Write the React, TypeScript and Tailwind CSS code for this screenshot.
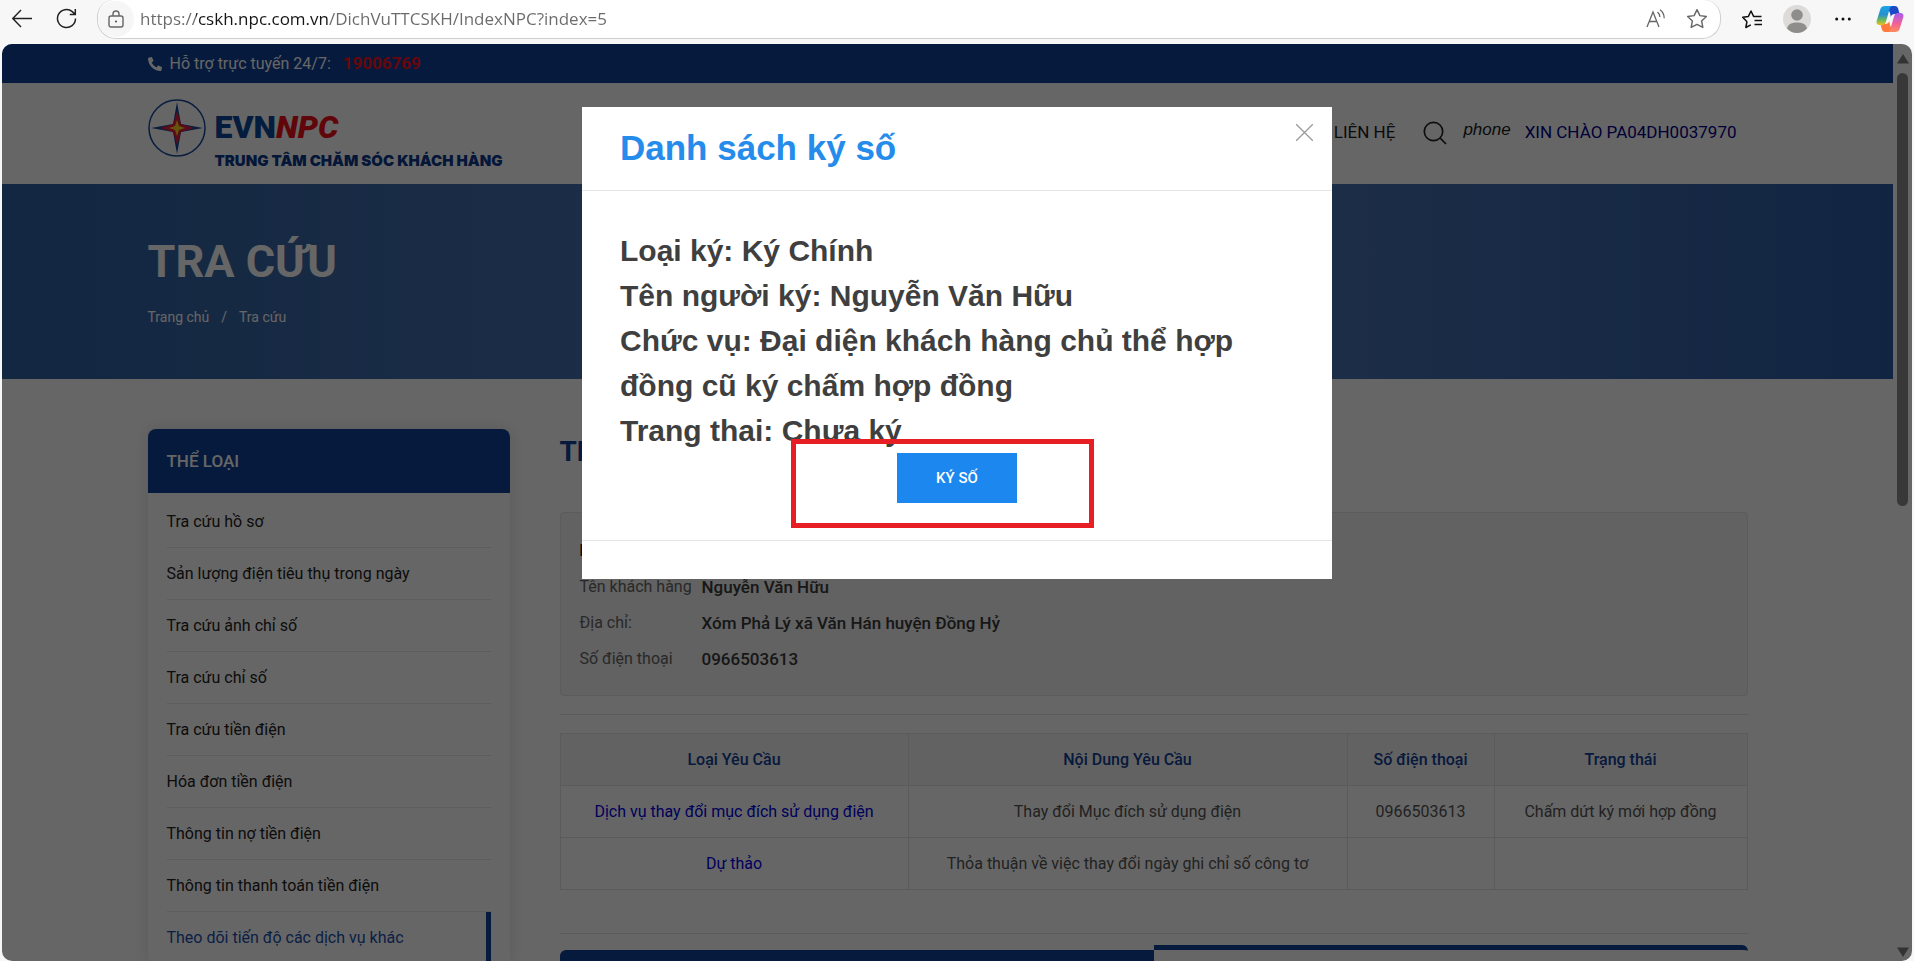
import { FaPhoneAlt } from "react-icons/fa";

type MenuItem = {
  label: string;
  active?: boolean;
};

type RequestRow = {
  type: string;
  content: string;
  phone: string;
  status: string;
};

const menuItems: MenuItem[] = [
  { label: "Tra cứu hồ sơ" },
  { label: "Sản lượng điện tiêu thụ trong ngày" },
  { label: "Tra cứu ảnh chỉ số" },
  { label: "Tra cứu chỉ số" },
  { label: "Tra cứu tiền điện" },
  { label: "Hóa đơn tiền điện" },
  { label: "Thông tin nợ tiền điện" },
  { label: "Thông tin thanh toán tiền điện" },
  { label: "Theo dõi tiến độ các dịch vụ khác", active: true },
];

const requests: RequestRow[] = [
  {
    type: "Dịch vụ thay đổi mục đích sử dụng điện",
    content: "Thay đổi Mục đích sử dụng điện",
    phone: "0966503613",
    status: "Chấm dứt ký mới hợp đồng",
  },
  {
    type: "Dự thảo",
    content: "Thỏa thuận về việc thay đổi ngày ghi chỉ số công tơ",
    phone: "",
    status: "",
  },
];

const customer = [
  { label: "Tên khách hàng", value: "Nguyễn Văn Hữu" },
  { label: "Địa chỉ:", value: "Xóm Phả Lý xã Văn Hán huyện Đồng Hỷ" },
  { label: "Số điện thoại", value: "0966503613" },
];

const signing = [
  "Loại ký: Ký Chính",
  "Tên người ký: Nguyễn Văn Hữu",
  "Chức vụ: Đại diện khách hàng chủ thể hợp đồng cũ ký chấm hợp đồng",
  "Trang thai: Chưa ký",
];

const STAR = "M10 1.5l2.6 5.4 5.9.8-4.3 4.1 1.1 5.9L10 14.9l-5.3 2.8 1.1-5.9L1.5 7.7l5.9-.8z";

function CopilotIcon() {
  return (
    <svg viewBox="0 0 28 26" className="h-[26px] w-7">
      <defs>
        <linearGradient id="cp-left" x1="0" y1="0" x2="0" y2="1">
          <stop offset="0" stopColor="#1aa5e8" />
          <stop offset="0.45" stopColor="#2790d0" />
          <stop offset="0.75" stopColor="#6fbb55" />
          <stop offset="1" stopColor="#f0c020" />
        </linearGradient>
        <linearGradient id="cp-right" x1="0" y1="0" x2="0" y2="1">
          <stop offset="0" stopColor="#a65cf0" />
          <stop offset="0.55" stopColor="#f0609a" />
          <stop offset="1" stopColor="#ff8a5c" />
        </linearGradient>
      </defs>
      <path d="M11 0h8c1.600 0 2.600 1 3.100 2.500L23.600 8H19c-2.500 0-3.500.8-4.200 3L14 7z" fill="#1b49c8" />
      <path d="M17 26H9c-1.600 0-2.600-1-3.100-2.500L4.400 18H9c2.500 0 3.500-.8 4.200-3l.8 4z" fill="#ff7a3c" />
      <path d="M9 0h7.500c-1.600 0-2.300 1.200-2.800 2.800L10 15.500C9.300 18 8.200 19 6.200 19H3.600C1 19 0 17.200.7 14.700L4.300 3.200C5 1 6.500 0 9 0z" fill="url(#cp-left)" />
      <path d="M19 26h-7.500c1.600 0 2.300-1.200 2.800-2.800L18 10.500C18.700 8 19.800 7 21.800 7h2.600c2.600 0 3.600 1.800 2.900 4.300L23.700 22.800C23 25 21.500 26 19 26z" fill="url(#cp-right)" />
    </svg>
  );
}

function BrowserBar() {
  return (
    <div className="flex h-11 shrink-0 items-start bg-[#f7f7f7] pr-2.5 pl-3">
      <button type="button" aria-label="Back" className="mt-2 mr-6">
        <svg viewBox="0 0 20 20" className="size-5 fill-none stroke-[#222] stroke-[1.4]">
          <path d="M20 10.500H.8M9 2 .8 10.500 9 19" />
        </svg>
      </button>
      <button type="button" aria-label="Refresh" className="mt-2 mr-5">
        <svg viewBox="0 0 21 21" className="size-[21px] fill-none stroke-[#222] stroke-[1.5]">
          <path d="M19.500 10.500a9 9 0 1 1-3.200-6.900L19 6.300M19.300 1v5.500h-5.500" />
        </svg>
      </button>
      <div className="flex h-[39px] flex-1 items-center rounded-b-[19px] rounded-t-[17px] border border-t-0 border-[#cfcfcf] bg-white pr-3">
        <button
          type="button"
          aria-label="Site information"
          className="mr-1.5 flex size-9 shrink-0 items-center justify-center rounded-full bg-[#f6f6f6]"
        >
          <svg viewBox="0 0 16 18" className="h-[18px] w-4 fill-none stroke-[#666] stroke-[1.4]">
            <rect x="1" y="6" width="14" height="11" rx="2" />
            <path d="M5 6V4a3 3 0 0 1 6 0v2" />
            <circle cx="8" cy="11.500" r="1" className="fill-[#444] stroke-none" />
          </svg>
        </button>
        <input
          type="text"
          aria-label="Address"
          readOnly
          value="https://cskh.npc.com.vn/DichVuTTCSKH/IndexNPC?index=5"
          className="min-w-0 flex-1 bg-[linear-gradient(90deg,#6a6a6a_56px,#151515_56px,#151515_189px,#6a6a6a_189px)] bg-clip-text font-['Open_Sans',sans-serif] text-[17px] text-transparent outline-none"
        />
        <button type="button" aria-label="Read aloud" className="mr-5">
          <svg viewBox="0 0 20 20" className="size-5 fill-none stroke-[#666] stroke-[1.3]">
            <path d="M1 18 7 3l6 15M3.200 12.500h7.600M11.500 3c1.700 1.400 2.300 3 2.400 5M14 .8c3 2.200 4.200 5 4.200 8.400" />
          </svg>
        </button>
        <button type="button" aria-label="Add to favorites">
          <svg viewBox="0 0 20 20" className="size-[22px] fill-none stroke-[#666] stroke-[1.3]">
            <path d={STAR} strokeLinejoin="round" />
          </svg>
        </button>
      </div>
      <div className="ml-5 flex h-[38px] items-center">
        <button type="button" aria-label="Favorites" className="mr-5">
          <svg viewBox="0 0 22 20" className="h-[21px] w-[22px] fill-none stroke-[#111] stroke-[1.5]">
            <path d="M6 12.300 1.700 7.700l5.700-.8L10 1.500l2.600 5.400h7.900M6 12l-1.200 6 5-2.700M13.500 11H21M13.500 15H21" strokeLinejoin="round" />
          </svg>
        </button>
        <button type="button" aria-label="Profile" className="mr-6">
          <svg viewBox="0 0 28 28" className="size-7">
            <circle cx="14" cy="14" r="14" fill="#dcdbd9" />
            <circle cx="14" cy="10" r="5.800" fill="#8f8d8a" />
            <path d="M4 23.500c1-4.500 5-6 10-6s9 1.500 10 6c-5.500 6-14.500 6-20 0z" fill="#8f8d8a" />
          </svg>
        </button>
        <button type="button" aria-label="Settings and more" className="mr-[25px]">
          <svg viewBox="0 0 16 4" className="h-1 w-4 fill-[#111]">
            <circle cx="1.700" cy="2" r="1.500" />
            <circle cx="8" cy="2" r="1.500" />
            <circle cx="14.300" cy="2" r="1.500" />
          </svg>
        </button>
        <button type="button" aria-label="Copilot">
          <CopilotIcon />
        </button>
      </div>
    </div>
  );
}

function LogoMark() {
  return (
    <svg viewBox="0 0 58 58" className="size-[58px]">
      <circle cx="29" cy="29" r="28" fill="none" stroke="#17499c" strokeWidth="1.500" />
      <path d="M29 3l4 22 22 4-22 4-4 22-4-22-22-4 22-4z" fill="#17499c" />
      <path d="M29 12l4 13 13 4-13 4-4 13-4-13-13-4 13-4z" fill="#e0203c" />
      <path d="M29 21l2 6 6 2-6 2-2 6-2-6-6-2 6-2z" fill="#ffd21e" />
    </svg>
  );
}

function SiteHeader() {
  return (
    <header>
      <div className="bg-[#114198]">
        <div className="mx-auto flex h-[39px] max-w-[1600px] items-center text-base text-white">
          <FaPhoneAlt className="mr-2 size-3.5" />
          <span>Hỗ trợ trực tuyến 24/7:</span>
          <a href="#hotline" className="ml-3 text-[17px] font-bold text-[#ff1020]">
            19006769
          </a>
        </div>
      </div>
      <div className="mx-auto flex h-[101px] max-w-[1600px] items-start justify-between pt-4 pr-[11px]">
        <a href="#home" className="flex gap-[9px]">
          <LogoMark />
          <span className="flex flex-col pt-3">
            <span className="text-[32px] leading-8 font-black text-[#0b469c]">
              EVN<i className="text-[#f0101c]">NPC</i>
            </span>
            <span className="mt-2 font-['Inter',sans-serif] text-[15px] leading-5 font-black text-[#0b3a8c]">
              TRUNG TÂM CHĂM SÓC KHÁCH HÀNG
            </span>
          </span>
        </a>
        <nav className="flex items-center pt-[18px] text-[17px] text-[#1a1a1a]">
          <a href="#contact" className="mr-7">
            LIÊN HỆ
          </a>
          <button type="button" aria-label="Tìm kiếm" className="mr-4">
            <svg viewBox="0 0 24 24" className="size-6 fill-none stroke-[#222] stroke-[1.7]">
              <circle cx="10.500" cy="10.500" r="9.200" />
              <path d="M17.200 17.200 23 23" />
            </svg>
          </button>
          <i className="mr-3.5 mb-1.5 font-['Liberation_Sans',sans-serif]">phone</i>
          <a href="#account" className="text-[#00008b]">
            XIN CHÀO PA04DH0037970
          </a>
        </nav>
      </div>
    </header>
  );
}

function Hero() {
  return (
    <section className="bg-[linear-gradient(90deg,#2f61a4,#4d75b4_40%,#4d75b4_65%,#2c5ca6)]">
      <div className="mx-auto h-[195px] max-w-[1600px] pt-[46px] text-white">
        <h1 className="text-[45px] leading-[64px] font-bold">TRA CỨU</h1>
        <div className="mt-[11px] flex gap-3 text-[14px] leading-6">
          <a href="#home">Trang chủ</a>
          <span>/</span>
          <span>Tra cứu</span>
        </div>
      </div>
    </section>
  );
}

function Sidebar() {
  return (
    <aside className="w-[362px] shrink-0 rounded-t-lg shadow-[0_0_16px_rgba(0,0,0,0.12)]">
      <h2 className="rounded-t-lg bg-[#114198] px-[19px] text-[17px] leading-[64px] font-medium text-white">
        THỂ LOẠI
      </h2>
      <ul className="px-[19px] pt-[3px]">
        {menuItems.map((item) => (
          <li key={item.label} className="border-b border-[#e8e8e8]">
            <a
              href="#menu"
              className={
                item.active
                  ? "block border-r-5 border-[#114198] text-base leading-[51px] text-[#1c4fae]"
                  : "block text-base leading-[51px] text-[#222]"
              }
            >
              {item.label}
            </a>
          </li>
        ))}
      </ul>
    </aside>
  );
}

function RequestTable() {
  return (
    <table className="w-full table-fixed border-collapse text-center text-base text-[#555]">
      <colgroup>
        <col className="w-[348px]" />
        <col />
        <col className="w-[147px]" />
        <col className="w-[253px]" />
      </colgroup>
      <thead>
        <tr className="bg-[#f4f4f4] text-[#114198]">
          <th className="h-[52px] border border-[#e4e4e4] font-medium">Loại Yêu Cầu</th>
          <th className="border border-[#e4e4e4] font-medium">Nội Dung Yêu Cầu</th>
          <th className="border border-[#e4e4e4] font-medium">Số điện thoại</th>
          <th className="border border-[#e4e4e4] font-medium">Trạng thái</th>
        </tr>
      </thead>
      <tbody>
        {requests.map((row) => (
          <tr key={row.type}>
            <td className="h-[52px] border border-[#e4e4e4]">
              <a href="#request" className="text-[#0000e6]">
                {row.type}
              </a>
            </td>
            <td className="border border-[#e4e4e4]">{row.content}</td>
            <td className="border border-[#e4e4e4]">{row.phone}</td>
            <td className="border border-[#e4e4e4]">{row.status}</td>
          </tr>
        ))}
      </tbody>
    </table>
  );
}

function MainContent() {
  return (
    <main className="min-w-0 flex-1">
      <h2 className="pt-1 text-[28px] leading-[38px] font-bold text-[#114198]">THEO DÕI TIẾN ĐỘ</h2>
      <section className="mt-[41px] rounded border border-[#e6e6e6] bg-[#f4f4f4] px-[19px] pt-5 pb-[18px] text-base leading-9 text-[#666]">
        <h3 className="font-bold text-[#222]">Mã khách hàng</h3>
        <dl className="grid grid-cols-[122px_1fr]">
          {customer.map((row) => (
            <div key={row.label} className="contents">
              <dt className="whitespace-nowrap">{row.label}</dt>
              <dd className="text-[17px] leading-9 font-medium text-[#3a3a3a]">{row.value}</dd>
            </div>
          ))}
        </dl>
      </section>
      <hr className="my-[18px] border-[#e4e4e4]" />
      <RequestTable />
      <hr className="mt-[43px] mb-[11px] border-[#e4e4e4]" />
      <div className="flex">
        <button type="button" aria-label="Quá trình" className="mt-[5px] h-16 flex-1 rounded-tl-md bg-[#114198]" />
        <button type="button" aria-label="Chi tiết" className="h-16 flex-1 rounded-tr-md border-t-5 border-[#114198]" />
      </div>
    </main>
  );
}

function PageScrollbar() {
  return (
    <div className="flex w-[19px] shrink-0 flex-col items-center bg-white pt-2.5 pb-1">
      <svg viewBox="0 0 12 10" className="h-2.5 w-3 fill-[#808080]">
        <path d="M6 0l6 9.500H0z" />
      </svg>
      <div className="mt-[9px] w-[11px] basis-[48%] rounded-full bg-[#8c8c8c]" />
      <svg viewBox="0 0 12 10" className="mt-auto h-2.5 w-3 fill-[#808080]">
        <path d="M0 .5h12L6 10z" />
      </svg>
    </div>
  );
}

function SignDialog() {
  return (
    <div
      role="dialog"
      aria-labelledby="sign-title"
      className="absolute inset-x-0 top-[63px] mx-auto w-[750px] bg-white font-['Liberation_Sans',Arial,sans-serif]"
    >
      <div className="flex items-start justify-between border-b border-[#e5e5e5] pt-[17px] pr-[19px] pb-[19px] pl-[38px]">
        <h2 id="sign-title" className="text-[35px] leading-[47px] font-bold text-[#258ceb]">
          Danh sách ký số
        </h2>
        <button type="button" aria-label="Đóng">
          <svg viewBox="0 0 16 16" className="size-[17px] fill-none stroke-[#999] stroke-[1.2]">
            <path d="M0 0l16 16M16 0L0 16" />
          </svg>
        </button>
      </div>
      <div className="px-[38px] pt-[37px] text-[30px] leading-[45px] font-bold text-[#3f3f3f]">
        {signing.map((line) => (
          <p key={line}>{line}</p>
        ))}
      </div>
      <div className="relative flex justify-center pb-[37px]">
        <button
          type="button"
          className="h-[50px] w-[120px] bg-[#1b87ef] font-['Roboto',sans-serif] text-[15px] font-medium text-white"
        >
          KÝ SỐ
        </button>
        <div className="pointer-events-none absolute -top-3.5 left-[209px] h-[89px] w-[303px] border-5 border-[#e81e25]" />
      </div>
      <div className="h-[39px] border-t border-[#e5e5e5]" />
    </div>
  );
}

export default function App() {
  return (
    <div className="flex h-screen flex-col overflow-hidden bg-[#f7f7f7] font-['Roboto','Noto_Sans',sans-serif]">
      <BrowserBar />
      <div className="relative mx-0.5 flex min-h-0 flex-1 overflow-hidden rounded-[10px]">
        <div className="min-w-0 flex-1 overflow-hidden bg-white">
          <SiteHeader />
          <Hero />
          <div className="mx-auto flex max-w-[1600px] items-start gap-[50px] pt-[50px]">
            <Sidebar />
            <MainContent />
          </div>
        </div>
        <PageScrollbar />
        <div className="absolute inset-0 bg-black/60" />
        <SignDialog />
      </div>
    </div>
  );
}
